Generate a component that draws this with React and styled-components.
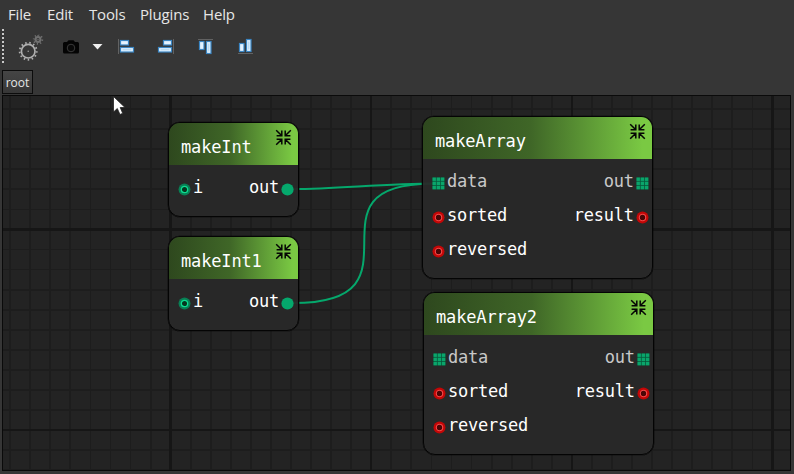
import React from "react";
import styled, { createGlobalStyle } from "styled-components";

const Global = createGlobalStyle`
  * { box-sizing: border-box; }
  html, body { margin: 0; background: #363636; overflow: hidden; }
`;

const Window = styled.div`
  width: 794px;
  height: 474px;
  display: flex;
  flex-direction: column;
  background: #363636;
  color: #e6e6e6;
  font-family: "Open Sans", "Noto Sans", sans-serif;
`;

const MenuBar = styled.nav`
  height: 29px;
  flex: none;
  display: flex;
  align-items: center;
  padding-left: 8px;
  font-size: 15px;
  letter-spacing: -0.15px;
  line-height: 29px;
`;

const MenuItem = styled.span`
  width: ${(p) => p.$width}px;
  white-space: nowrap;
`;

const ToolBar = styled.div`
  height: 41px;
  flex: none;
  display: flex;
  align-items: flex-start;
`;

const Grip = styled.div`
  width: 2px;
  height: 35px;
  margin-left: 2px;
  background: repeating-linear-gradient(#c8c8c8 0 2px, transparent 2px 4px);
`;

const Tool = styled.svg`
  display: block;
  flex: none;
  margin-left: ${(p) => p.$gap}px;
`;

const TabRow = styled.div`
  height: 25px;
  flex: none;
  padding-left: 2px;
`;

const Tab = styled.div`
  width: 31px;
  height: 24px;
  border: 1px solid #0c0c0c;
  background: linear-gradient(#454545, #373737);
  font-size: 12px;
  line-height: 23px;
  text-align: center;
`;

const Canvas = styled.main`
  position: relative;
  width: 789px;
  height: 376px;
  flex: none;
  margin-left: 2px;
  border: 1px solid #0a0a0a;
  overflow: hidden;
  background:
    repeating-linear-gradient(90deg, transparent 0 166.4px, #161616 166.4px 168.9px, transparent 168.9px 200.6px),
    repeating-linear-gradient(transparent 0 132.2px, #161616 132.2px 134.7px, transparent 134.7px 200.6px),
    repeating-linear-gradient(90deg, transparent 0 6.3px, #1d1d1d 6.3px 8.1px, transparent 8.1px 20.06px),
    repeating-linear-gradient(transparent 0 12.2px, #1d1d1d 12.2px 14px, transparent 14px 20.06px),
    #232323;
`;

const Wires = styled.svg`
  position: absolute;
  left: -3px;
  top: -96px;
`;

const NodeBox = styled.section`
  position: absolute;
  left: ${(p) => p.$x - 3}px;
  top: ${(p) => p.$y - 96}px;
  width: ${(p) => p.$w}px;
  height: ${(p) => p.$h}px;
  border: 1px solid #040404;
  box-shadow: 0 0 0 0.3px #040404;
  border-radius: 12px;
  overflow: hidden;
  background: rgba(41, 41, 41, 0.95);
  font-family: "DejaVu Sans Mono", monospace;
  font-size: 17px;
  letter-spacing: -0.15px;
  color: #fff;
`;

const NodeHeader = styled.header`
  height: 42px;
  display: flex;
  justify-content: space-between;
  padding: 0 6px 0 12px;
  line-height: 49px;
  background: linear-gradient(90deg, #2e481e 0%, #3f6627 47%, #7ac943 96%);
`;

const Ports = styled.div`
  padding: 6px 3.5px 0 9.2px;
  letter-spacing: -0.22px;
`;

const PortRow = styled.div`
  display: flex;
  justify-content: space-between;
  height: 34px;
`;

const Port = styled.div`
  display: flex;
  height: 34px;
  line-height: 33px;
  gap: ${(p) => p.$gap}px;
  color: ${(p) => (p.$muted ? "#c8c8c8" : "#fff")};
`;

const PinSvg = styled.svg`
  display: block;
  width: 13px;
  height: 13px;
  margin-top: 12px;
`;

const CollapseSvg = styled.svg`
  display: block;
  margin-top: 6px;
`;

const Cursor = styled.svg`
  position: absolute;
  left: 110px;
  top: 0;
`;

function Pin({ kind }) {
  if (kind === "array") {
    return (
      <PinSvg viewBox="0 0 13 13">
        <rect x="0.5" y="0.5" width="12" height="12" fill="#075a3c" />
        {[0.5, 4.7, 8.9].map((y) =>
          [0.5, 4.7, 8.9].map((x) => (
            <rect key={x + "-" + y} x={x} y={y} width="3.4" height="3.4" fill="#0aa56b" />
          ))
        )}
      </PinSvg>
    );
  }
  if (kind === "filled") {
    return (
      <PinSvg viewBox="0 0 13 13">
        <circle cx="6.5" cy="6.5" r="6.1" fill="#05a86c" />
      </PinSvg>
    );
  }
  const red = kind === "bool";
  return (
    <PinSvg viewBox="0 0 13 13">
      <circle cx="6.5" cy="6.5" r="6" fill={red ? "#c40606" : "#087f54"} />
      <circle
        cx="6.5"
        cy="6.5"
        r="3.2"
        fill={red ? "#4a0606" : "#05351f"}
        stroke={red ? "#f24848" : "#0ddc90"}
        strokeWidth={red ? 1.1 : 1.3}
      />
    </PinSvg>
  );
}

function CollapseIcon() {
  return (
    <CollapseSvg width="17" height="17" viewBox="0 0 17 17" fill="none" stroke="#050505" strokeWidth="1.5">
      <path d="M1.200 1.200L6.300 6.300M6.800 1.600V6.800H1.600M15.800 1.200L10.700 6.300M10.200 1.600V6.800H15.400M1.200 15.800L6.300 10.700M1.600 10.200H6.800V15.400M15.800 15.800L10.700 10.700M15.400 10.200H10.200V15.400" />
    </CollapseSvg>
  );
}

function Node({ title, x, y, w, h, rows }) {
  return (
    <NodeBox $x={x} $y={y} $w={w} $h={h}>
      <NodeHeader>
        <span>{title}</span>
        <CollapseIcon />
      </NodeHeader>
      <Ports>
        {rows.map(([input, output], i) => (
          <PortRow key={i}>
            <Port $muted={input.kind === "array"} $gap={1.8}>
              <Pin kind={input.kind} />
              <span>{input.name}</span>
            </Port>
            {output && (
              <Port $muted={output.kind === "array"} $gap={2}>
                <span>{output.name}</span>
                <Pin kind={output.kind} />
              </Port>
            )}
          </PortRow>
        ))}
      </Ports>
    </NodeBox>
  );
}

const intRows = [[{ name: "i", kind: "int" }, { name: "out", kind: "filled" }]];
const arrayRows = [
  [{ name: "data", kind: "array" }, { name: "out", kind: "array" }],
  [{ name: "sorted", kind: "bool" }, { name: "result", kind: "bool" }],
  [{ name: "reversed", kind: "bool" }],
];

const nodes = [
  { title: "makeInt", x: 168, y: 122, w: 130.5, h: 94.5, rows: intRows },
  { title: "makeInt1", x: 168, y: 236, w: 130.5, h: 94.5, rows: intRows },
  { title: "makeArray", x: 422, y: 116, w: 231.4, h: 162.5, rows: arrayRows },
  { title: "makeArray2", x: 423, y: 292, w: 231.4, h: 162.5, rows: arrayRows },
];

function Bar(props) {
  return <rect {...props} fill="#e4f3ff" stroke="#3b86c4" strokeWidth="1.2" />;
}

function Gear({ cx, cy, r, teeth, color, width }) {
  return (
    <g stroke={color} fill="none">
      <circle cx={cx} cy={cy} r={r} strokeWidth={width} />
      <circle
        cx={cx}
        cy={cy}
        r={r + width / 2 + 0.9}
        strokeWidth="1.8"
        pathLength={teeth * 2}
        strokeDasharray="0.75 1.25"
      />
      <circle cx={cx} cy={cy} r="0.7" fill={color} stroke="none" />
    </g>
  );
}

export default function App() {
  return (
    <Window>
      <Global />
      <MenuBar>
        <MenuItem $width={39}>File</MenuItem>
        <MenuItem $width={42}>Edit</MenuItem>
        <MenuItem $width={51}>Tools</MenuItem>
        <MenuItem $width={63}>Plugins</MenuItem>
        <MenuItem $width={40}>Help</MenuItem>
      </MenuBar>
      <ToolBar>
        <Grip />
        <Tool $gap={12} width="30" height="34" viewBox="16 29 30 34">
          <Gear cx={28.2} cy={51.2} r={6.8} teeth={13} color="#b0b0b0" width={1.7} />
          <Gear cx={38} cy={39.5} r={2.4} teeth={8} color="#707070" width={2} />
        </Tool>
        <Tool $gap={14} width="44" height="34" viewBox="60 29 44 34">
          <path d="M64.500 42h2.500l1.500-1.800h5l1.500 1.800h2.500q1.500 0 1.500 1.500v8.500q0 1.500-1.500 1.500h-13q-1.500 0-1.500-1.500v-8.500q0-1.500 1.500-1.500z" fill="#040404" />
          <circle cx="71" cy="48" r="3.800" fill="#090909" stroke="#3a3a3a" strokeWidth="1" />
          <path d="M92.500 44h10l-5 5.500z" fill="#f0f0f0" />
        </Tool>
        <Tool $gap={12} width="22" height="34" viewBox="116 29 22 34">
          <path d="M118.500 39v15" stroke="#626262" />
          <Bar x="120.500" y="40.500" width="8" height="4.500" />
          <Bar x="120.500" y="47.500" width="13" height="4.500" />
          <path d="M122.500 49.800h9" stroke="#a9d2f0" />
        </Tool>
        <Tool $gap={18} width="22" height="34" viewBox="156 29 22 34">
          <path d="M173.500 39v15" stroke="#626262" />
          <Bar x="163.500" y="40.500" width="8" height="4.500" />
          <Bar x="158.500" y="47.500" width="13" height="4.500" />
          <path d="M160.500 49.800h9" stroke="#a9d2f0" />
        </Tool>
        <Tool $gap={18} width="22" height="34" viewBox="196 29 22 34">
          <path d="M198 39.500h15" stroke="#626262" />
          <Bar x="199.500" y="41.500" width="4.500" height="8" />
          <Bar x="206.500" y="41.500" width="4.500" height="12" />
          <path d="M208.800 43.500v8" stroke="#a9d2f0" />
        </Tool>
        <Tool $gap={18} width="22" height="34" viewBox="236 29 22 34">
          <path d="M238 53.500h15" stroke="#626262" />
          <Bar x="239.500" y="43.500" width="4.500" height="8" />
          <Bar x="246.500" y="39.500" width="4.500" height="12" />
          <path d="M248.800 41.500v8" stroke="#a9d2f0" />
        </Tool>
      </ToolBar>
      <TabRow>
        <Tab>root</Tab>
      </TabRow>
      <Canvas>
        <Wires width="794" height="474" viewBox="0 0 794 474" fill="none" stroke="#05a86c" strokeWidth="2">
          <path d="M293 189C340 189 380 183.500 438 183.500" />
          <path d="M293 303C433 303 297 184 431 183.700" />
        </Wires>
        {nodes.map((n) => (
          <Node key={n.title} {...n} />
        ))}
        <Cursor width="14" height="20" viewBox="0 0 14 20">
          <path d="M0.500 0.500V16L4.300 12.500L7 18.500L9.700 17.300L7.200 11.500H12z" fill="#fff" stroke="#222" strokeWidth="0.800" />
        </Cursor>
      </Canvas>
    </Window>
  );
}
